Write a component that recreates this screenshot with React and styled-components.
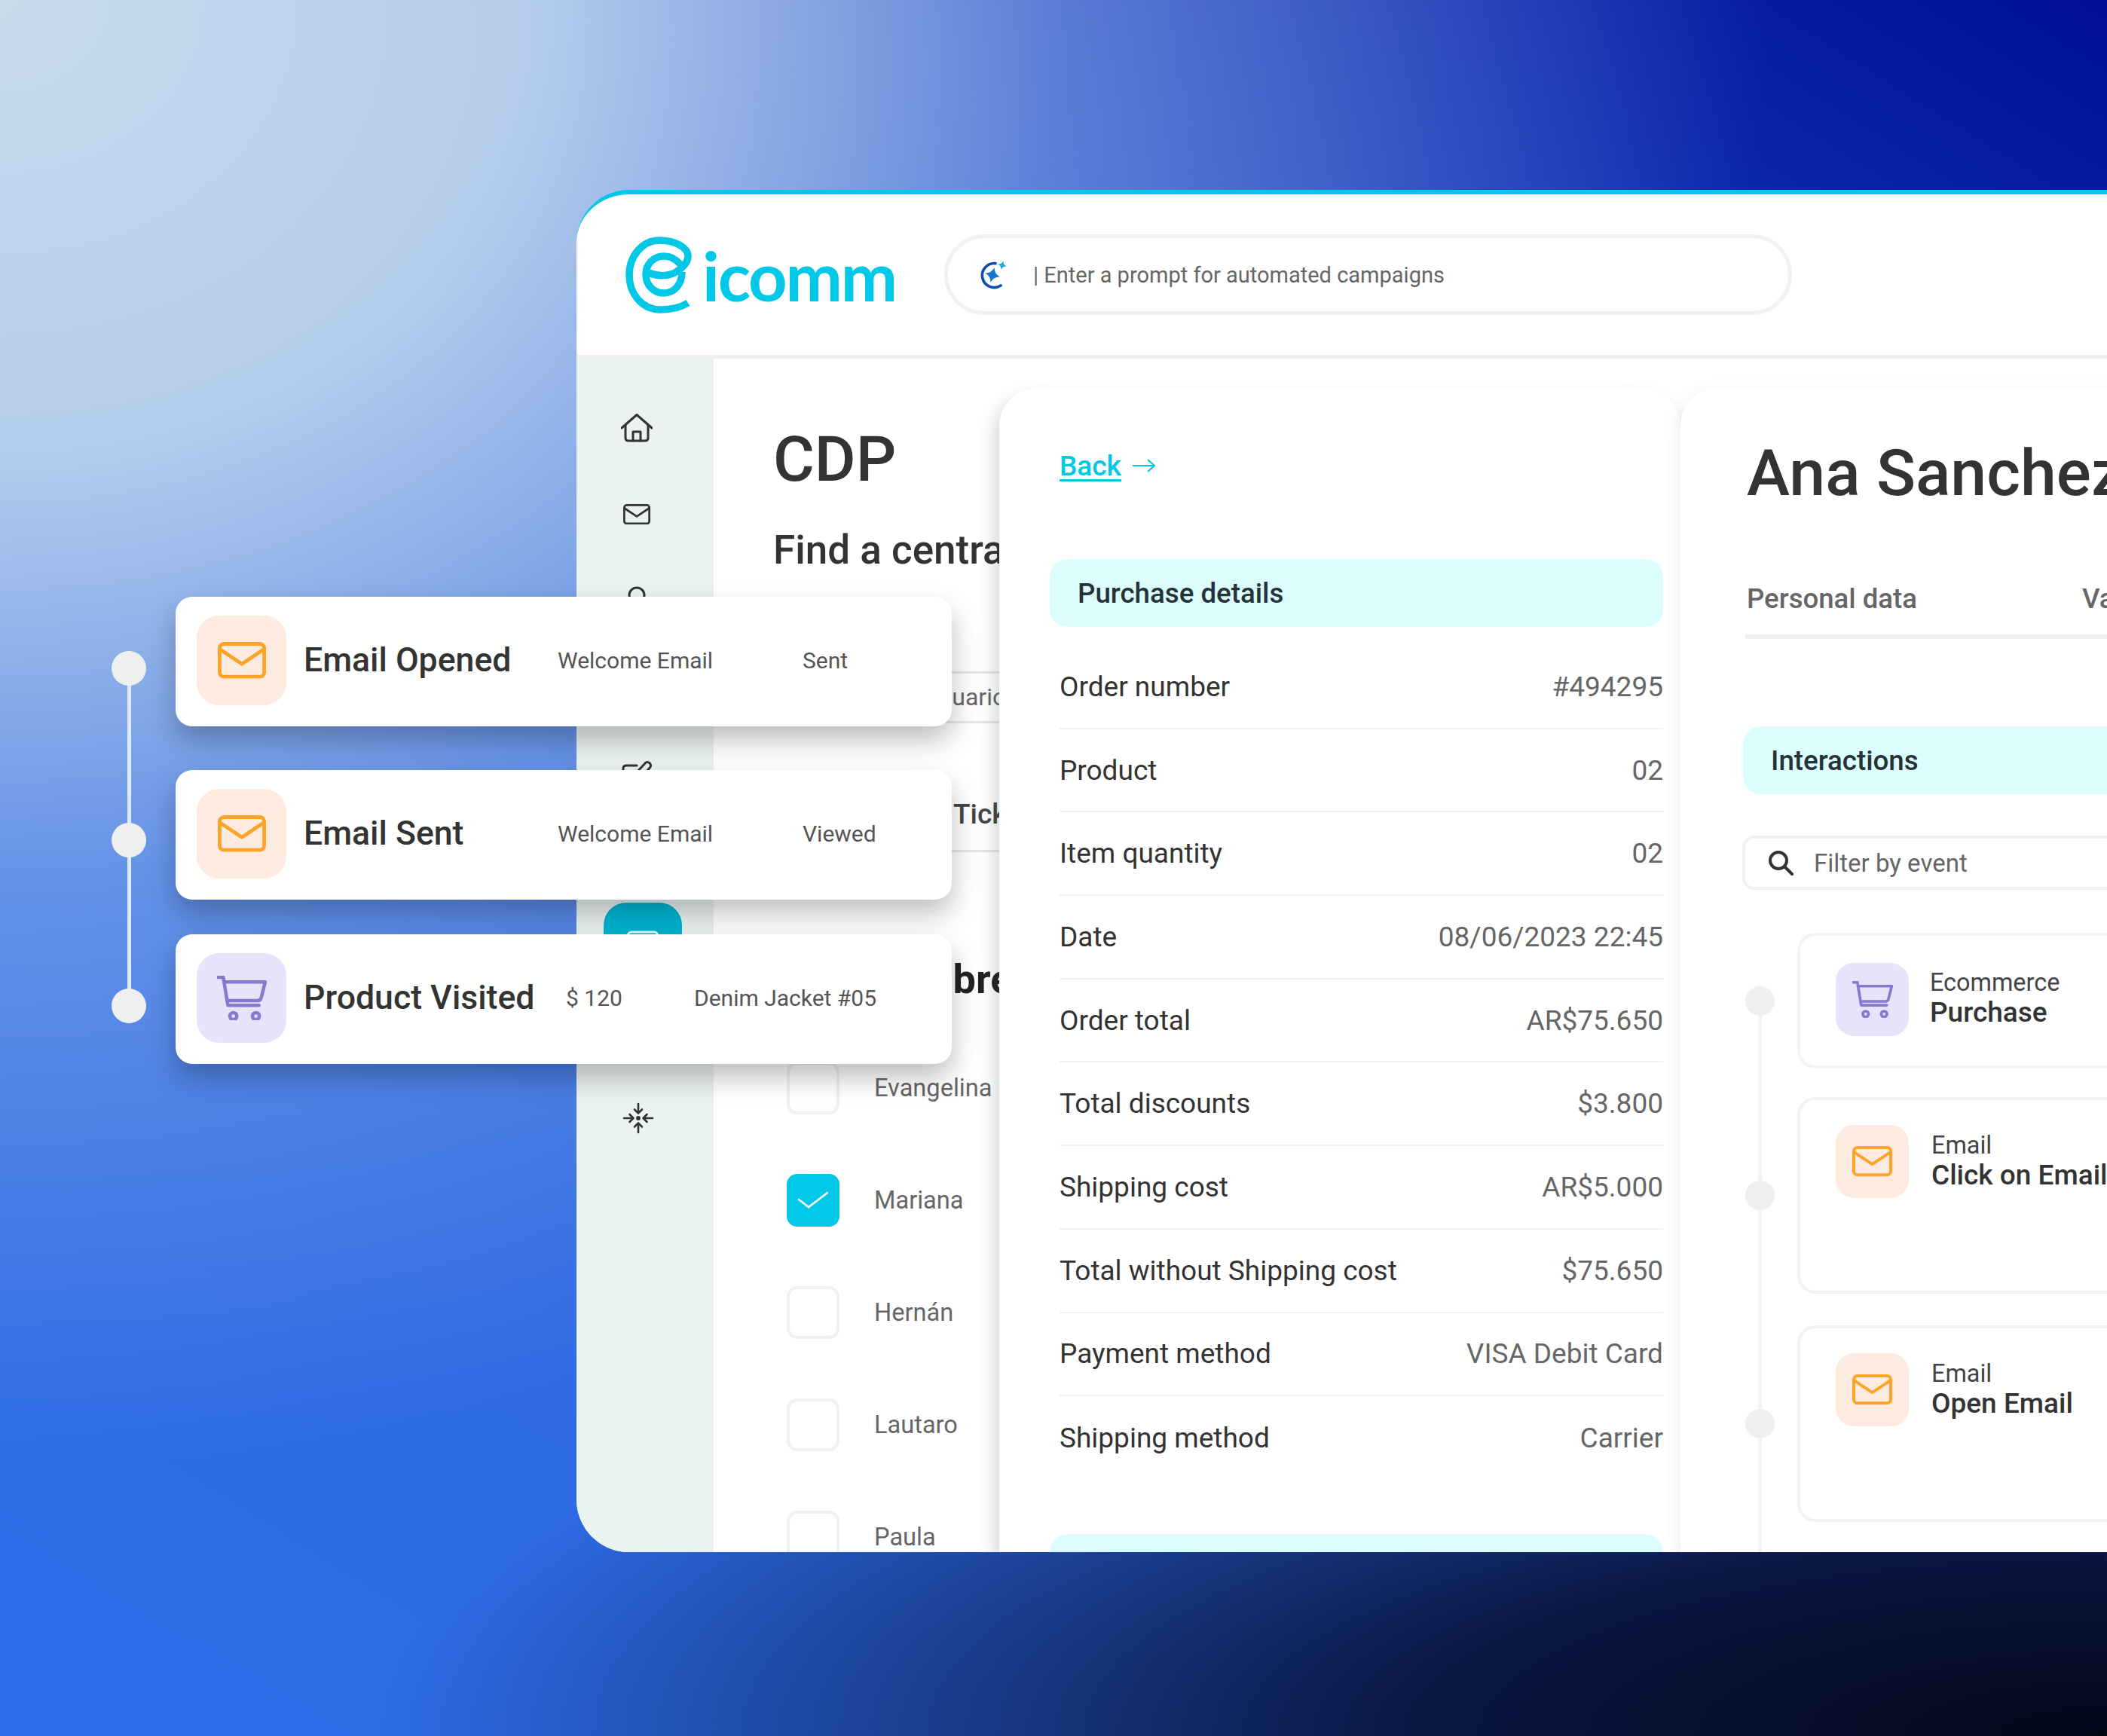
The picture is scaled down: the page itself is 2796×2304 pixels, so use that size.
import React from 'react';
import styled, { createGlobalStyle } from 'styled-components';

const GlobalStyle = createGlobalStyle`
  html, body { margin: 0; padding: 0; }
  body { font-family: Roboto, "Liberation Sans", sans-serif; color: #333; }
  * { box-sizing: border-box; }
`;

const Page = styled.div`
  position: relative;
  width: 2796px;
  height: 2304px;
  overflow: hidden;
  padding: 252px 0 0 765px;
  background:
    radial-gradient(ellipse 2350px 1950px at 0 0, #c8dbeb 0%, rgba(190, 212, 238, .94) 30%, rgba(140, 175, 235, .58) 60%, rgba(120, 165, 235, 0) 100%),
    radial-gradient(ellipse 2300px 640px at 100% 100%, #030818 0%, rgba(6, 14, 50, .9) 40%, rgba(10, 30, 90, 0) 100%),
    linear-gradient(212deg, #000f98 0%, #0a26ac 13%, #2f66dc 47%, #2c6eea 100%);
`;

const Screen = styled.div`
  width: 2200px;
  height: 1808px;
  background: #fff;
  border-top: 6px solid #00c8e6;
  border-radius: 70px 0 0 70px;
  overflow: hidden;
  display: flex;
  flex-direction: column;
`;

const Header = styled.header`
  flex: 0 0 218px;
  display: flex;
  align-items: center;
  padding: 0 0 0 65px;
  border-bottom: 5px solid #f0f0f0;
`;

const Logo = styled.div`
  width: 423px;
  display: flex;
  align-items: center;
  gap: 14px;
  color: #00c8e6;
`;

const LogoWord = styled.span`
  font-family: Lato, sans-serif;
  font-size: 90px;
  font-weight: 700;
  line-height: 92px;
  letter-spacing: -2.2px;
`;

const PromptBar = styled.div`
  width: 1125px;
  height: 107px;
  display: flex;
  align-items: center;
  gap: 34px;
  padding-left: 41px;
  border: 5px solid #f1f1f1;
  border-radius: 54px;
  font-size: 29px;
  color: #666;
`;

const Body = styled.div`
  flex: 1;
  display: flex;
  min-height: 0;
`;

const Sidebar = styled.nav`
  flex: 0 0 182px;
  display: flex;
  flex-direction: column;
  padding: 35px 22px 0 0;
  background: #ebf2f2;
`;

const NavItem = styled.div`
  flex: 0 0 114.5px;
  display: flex;
  align-items: center;
  justify-content: center;
  color: #333;
`;

const ActiveNav = styled.div`
  flex: 0 0 auto;
  width: 104px;
  height: 114px;
  margin-left: 16px;
  border-radius: 30px;
  background: #00b4d2;
  display: flex;
  align-items: center;
  justify-content: center;
  color: #dff8fb;
`;

const Content = styled.section`
  flex: 0 0 379px;
  overflow: hidden;
  padding: 92px 0 0 79px;
`;

const Title = styled.h1`
  margin: 0;
  font-size: 84px;
  font-weight: 500;
  line-height: 84px;
  color: #333;
  white-space: nowrap;
`;

const Subtitle = styled.h2`
  margin: 48px 0 0;
  font-size: 53px;
  font-weight: 500;
  line-height: 60px;
  color: #333;
  white-space: nowrap;
`;

const TableRow = styled.div`
  height: ${(p) => p.$height}px;
  margin-top: ${(p) => p.$top || 0}px;
  padding: ${(p) => p.$pad || 0}px 0 0 ${(p) => p.$indent}px;
  border-bottom: 3px solid #e6e6e6;
  border-top: ${(p) => (p.$lined ? '3px solid #e6e6e6' : 'none')};
  font-size: ${(p) => p.$size}px;
  font-weight: ${(p) => p.$weight || 400};
  line-height: 60px;
  color: ${(p) => p.$color || '#666'};
  white-space: nowrap;
`;

const SectionHeading = styled.h3`
  margin: 139px 0 39px;
  padding-left: 131px;
  font-size: 54px;
  font-weight: 700;
  line-height: 60px;
  color: #222;
  white-space: nowrap;
`;

const CheckRow = styled.label`
  height: 149px;
  display: flex;
  align-items: center;
  gap: 46px;
  padding-left: 18px;
  font-size: 32.6px;
  color: #666;
`;

const Box = styled.span`
  flex: 0 0 70px;
  height: 70px;
  display: flex;
  align-items: center;
  justify-content: center;
  border-radius: 14px;
  border: ${(p) => (p.$checked ? 'none' : '4px solid #f1f1f1')};
  background: ${(p) => (p.$checked ? '#00c8e6' : '#fff')};
`;

const DetailPanel = styled.section`
  position: relative;
  z-index: 1;
  flex: 0 0 904px;
  margin-top: 39px;
  padding: 79px 23px 0 80px;
  background: #fff;
  border-radius: 50px 50px 0 0;
  box-shadow: -6px 12px 24px rgba(40, 60, 60, .2);
  overflow: hidden;
`;

const BackLink = styled.a`
  display: flex;
  align-items: center;
  gap: 14px;
  height: 48px;
  font-size: 37px;
  font-weight: 500;
  color: #00c8e6;
  span { text-decoration: underline; text-underline-offset: 5px; }
`;

const Band = styled.div`
  height: 90px;
  margin: ${(p) => p.$margin};
  padding-left: ${(p) => p.$pad}px;
  display: flex;
  align-items: center;
  border-radius: 24px;
  background: #dcfdfe;
  font-size: 36.7px;
  font-weight: 500;
  color: #263238;
  white-space: nowrap;
`;

const DetailRow = styled.div`
  height: 110.7px;
  display: flex;
  align-items: center;
  justify-content: space-between;
  border-bottom: ${(p) => (p.$last ? 'none' : '2px solid #f1f1f1')};
  font-size: 37px;
  color: #333;
  b { font-weight: 400; color: #666; }
`;

const ProfilePanel = styled.section`
  position: relative;
  z-index: 2;
  flex: 0 0 900px;
  margin-top: 39px;
  padding: 63px 0 0 88px;
  background: #fff;
  border-radius: 50px 0 0 0;
  box-shadow: -2px 6px 22px rgba(40, 60, 60, .1);
  overflow: hidden;
`;

const Name = styled.h1`
  margin: 0;
  font-size: 86px;
  font-weight: 500;
  line-height: 100px;
  color: #333;
  white-space: nowrap;
`;

const Tabs = styled.div`
  margin: 93px 0 0 -2px;
  padding: 0 0 23px 2px;
  display: flex;
  gap: 219px;
  height: 77px;
  border-bottom: 6px solid #efefef;
  font-size: 36.6px;
  font-weight: 500;
  line-height: 48px;
  color: #666;
  white-space: nowrap;
`;

const FilterBox = styled.div`
  height: 72px;
  margin: 55px 0 57px -6px;
  padding-left: 30px;
  display: flex;
  align-items: center;
  gap: 27px;
  border: 4px solid #f1f1f1;
  border-radius: 16px;
  font-size: 33px;
  color: #666;
`;

const Timeline = styled.div`
  display: flex;
  gap: 30px;
  margin-left: -2px;
`;

const Rail = styled.div`
  position: relative;
  flex: 0 0 ${(p) => p.$width}px;
  display: flex;
  flex-direction: column;
  align-items: center;
  padding-top: ${(p) => p.$top}px;

  &::before {
    content: '';
    position: absolute;
    top: ${(p) => p.$top}px;
    bottom: ${(p) => p.$bottom}px;
    left: 50%;
    width: 5px;
    margin-left: -2.5px;
    background: ${(p) => p.$line};
  }
`;

const Dot = styled.span`
  position: relative;
  flex: 0 0 auto;
  width: ${(p) => p.$size}px;
  height: ${(p) => p.$size}px;
  margin-bottom: ${(p) => p.$after}px;
  border-radius: 50%;
  background: ${(p) => p.$color};
`;

const EventList = styled.div`
  flex: 1;
  display: flex;
  flex-direction: column;
`;

const EventCard = styled.article`
  height: ${(p) => p.$height}px;
  margin-bottom: ${(p) => p.$after}px;
  padding: ${(p) => p.$top}px 0 0 47px;
  display: flex;
  align-items: flex-start;
  gap: ${(p) => p.$gap}px;
  border: 4px solid #f2f2f2;
  border-right: none;
  border-radius: 24px 0 0 24px;
`;

const IconTile = styled.span`
  flex: 0 0 ${(p) => p.$size}px;
  height: ${(p) => p.$size}px;
  display: flex;
  align-items: center;
  justify-content: center;
  border-radius: ${(p) => p.$radius}px;
  background: ${(p) => (p.$tone === 'cart' ? '#e7e3fb' : '#feebe0')};
`;

const EventText = styled.div`
  padding-top: ${(p) => p.$top}px;
  font-size: 32.4px;
  line-height: 39px;
  color: #444;
  white-space: nowrap;
  strong { display: block; font-size: 37px; font-weight: 500; color: #333; }
`;

const FloatGroup = styled.div`
  position: absolute;
  z-index: 5;
  left: 148px;
  top: 792px;
  display: flex;
  gap: 39px;
`;

const FloatCards = styled.div`
  width: 1030px;
  display: flex;
  flex-direction: column;
`;

const FloatCard = styled.article`
  height: 172px;
  margin-bottom: ${(p) => p.$after}px;
  padding: 0 0 3px 28px;
  display: flex;
  align-items: center;
  background: #fff;
  border-radius: 22px;
  box-shadow: 0 18px 36px rgba(0, 0, 0, .26);
`;

const FloatTitle = styled.span`
  flex: 0 0 ${(p) => p.$width}px;
  margin-left: 23px;
  padding-bottom: 1px;
  font-size: 44.6px;
  font-weight: 500;
  color: #333;
  white-space: nowrap;
`;

const FloatMeta = styled.span`
  flex: 0 0 ${(p) => p.$width}px;
  font-size: 30px;
  color: #555;
  white-space: nowrap;
`;

const MailIcon = ({ size = 64, color = '#fba428', sw = 5 }) => (
  <svg width={size} height={size * 0.76} viewBox="0 0 66 50" fill="none" stroke={color} strokeWidth={sw} strokeLinejoin="round" strokeLinecap="round">
    <rect x="2.5" y="2.5" width="61" height="45" rx="6" />
    <path d="M3 10 L33 30 L63 10" />
  </svg>
);

const CartIcon = ({ size = 66, sw = 4.4 }) => (
  <svg width={size} height={size * 0.906} viewBox="0 0 64 58" fill="none" stroke="#8878d0" strokeWidth={sw} strokeLinecap="round" strokeLinejoin="round">
    <path d="M1 2 H8 L14 38 H54" />
    <path d="M9 8 H62 L57 28 Q56 32 52 32 H13" />
    <circle cx="21" cy="52" r="4.5" />
    <circle cx="50" cy="52" r="4.5" />
  </svg>
);

const HomeIcon = () => (
  <svg width="42" height="38" viewBox="0 0 42 38" fill="none" stroke="currentColor" strokeWidth="3" strokeLinecap="round" strokeLinejoin="round">
    <path d="M1 19 L21 1.5 L41 19" />
    <path d="M6 15 V32 Q6 36 10 36 H32 Q36 36 36 32 V15" />
    <path d="M16 36 V24 H26 V36" />
  </svg>
);

const UserIcon = () => (
  <svg width="40" height="40" viewBox="0 0 40 40" fill="none" stroke="currentColor" strokeWidth="3">
    <circle cx="20" cy="13" r="10" />
    <path d="M4 38 Q6 26 20 26 Q34 26 36 38" />
  </svg>
);

const EditIcon = () => (
  <svg width="40" height="40" viewBox="0 0 40 40" fill="none" stroke="currentColor" strokeWidth="3" strokeLinecap="round">
    <path d="M2 22 V14 Q2 10 6 10 H20" />
    <path d="M19 20 L32 6 A4.5 4.5 0 0 1 38 12 L26 26" />
  </svg>
);

const SegmentIcon = () => (
  <svg width="44" height="40" viewBox="0 0 44 40" fill="none" stroke="currentColor" strokeWidth="3">
    <rect x="2" y="2" width="40" height="36" rx="5" />
    <path d="M12 14 H32 M12 24 H32" />
  </svg>
);

const CollapseIcon = () => (
  <svg width="42" height="42" viewBox="0 0 42 42" fill="none" stroke="currentColor" strokeWidth="2.6" strokeLinecap="round" strokeLinejoin="round" style={{ marginLeft: 3 }}>
    <circle cx="21" cy="21" r="1.6" fill="currentColor" />
    <path d="M21 2 V14 M16 9.5 L21 14.5 L26 9.5" />
    <path d="M21 40 V28 M16 32.5 L21 27.5 L26 32.5" />
    <path d="M2 21 H14 M9.5 16 L14.5 21 L9.5 26" />
    <path d="M40 21 H28 M32.5 16 L27.5 21 L32.5 26" />
  </svg>
);

const IcommMark = () => (
  <svg width="88" height="102" viewBox="15 15 88 102" fill="none" stroke="#00c8e6" strokeWidth="9.5">
    <path d="M98 103 C88 109 76 112 62 112 C36 112 20 90 20 66 C20 40 38 20 60 20 C82 20 98 30 98 41 C98 50 90 57 82 62 C72 68 58 68 46 63" />
    <path d="M88 52 C82 45 74 41 66 41 C52 41 42 52 42 65 C42 79 52 90 66 90 C80 90 90 78 90 62" />
  </svg>
);

const SparkIcon = () => (
  <svg width="38" height="38" viewBox="0 0 38 38" fill="none">
    <path d="M22 3.6 A16 16 0 1 0 29 33" stroke="#0b4cb5" strokeWidth="3.6" strokeLinecap="round" />
    <path d="M18 9 Q20 17 28 19 Q20 21 18 29 Q16 21 8 19 Q16 17 18 9 Z" fill="#1476cc" transform="rotate(15 18 19)" />
    <path d="M31 0 Q32 5 37 6 Q32 7 31 12 Q30 7 25 6 Q30 5 31 0 Z" fill="#27a3df" transform="rotate(15 31 6)" />
  </svg>
);

const SearchIcon = () => (
  <svg width="34" height="34" viewBox="0 0 34 34" fill="none" stroke="#333" strokeWidth="4" strokeLinecap="round">
    <circle cx="14" cy="14" r="11" />
    <path d="M22.5 22.5 L32 32" />
  </svg>
);

const ArrowIcon = () => (
  <svg width="32" height="20" viewBox="0 0 32 20" fill="none" stroke="#00c8e6" strokeWidth="2">
    <path d="M1 10 H30 M21 2 L30 10 L21 18" />
  </svg>
);

const CheckMark = () => (
  <svg width="42" height="26" viewBox="0 0 42 26" fill="none" stroke="#fff" strokeWidth="2.6" strokeLinecap="round">
    <path d="M2 12 L15 22 L40 3" />
  </svg>
);

const SidebarMail = () => <MailIcon size={36} color="currentColor" sw={5} />;

const navTop = [HomeIcon, SidebarMail, UserIcon, UserIcon, EditIcon, UserIcon];

const people = [
  { name: 'Evangelina' },
  { name: 'Mariana', checked: true },
  { name: 'Hernán' },
  { name: 'Lautaro' },
  { name: 'Paula' },
];

const details = [
  ['Order number', '#494295'],
  ['Product', '02'],
  ['Item quantity', '02'],
  ['Date', '08/06/2023 22:45'],
  ['Order total', 'AR$75.650'],
  ['Total discounts', '$3.800'],
  ['Shipping cost', 'AR$5.000'],
  ['Total without Shipping cost', '$75.650'],
  ['Payment method', 'VISA Debit Card'],
  ['Shipping method', 'Carrier'],
];

const events = [
  { tone: 'cart', kind: 'Ecommerce', label: 'Purchase', height: 180, after: 38, top: 36, textTop: 7, gap: 28 },
  { tone: 'mail', kind: 'Email', label: 'Click on Email', height: 261, after: 42, top: 33, textTop: 8, gap: 30 },
  { tone: 'mail', kind: 'Email', label: 'Open Email', height: 261, after: 0, top: 33, textTop: 8, gap: 30 },
];

const floats = [
  { tone: 'mail', title: 'Email Opened', titleW: 337, a: 'Welcome Email', aW: 325, b: 'Sent', after: 58 },
  { tone: 'mail', title: 'Email Sent', titleW: 337, a: 'Welcome Email', aW: 325, b: 'Viewed', after: 46 },
  { tone: 'cart', title: 'Product Visited', titleW: 348, a: '$ 120', aW: 170, b: 'Denim Jacket #05', after: 0 },
];

function App() {
  return (
    <Page>
      <GlobalStyle />
      <Screen>
        <Header>
          <Logo>
            <IcommMark />
            <LogoWord>icomm</LogoWord>
          </Logo>
          <PromptBar>
            <SparkIcon />
            <span>| Enter a prompt for automated campaigns</span>
          </PromptBar>
        </Header>
        <Body>
          <Sidebar>
            {navTop.map((Icon, i) => (
              <NavItem key={i}><Icon /></NavItem>
            ))}
            <NavItem>
              <ActiveNav><SegmentIcon /></ActiveNav>
            </NavItem>
            <NavItem><UserIcon /></NavItem>
            <NavItem><CollapseIcon /></NavItem>
          </Sidebar>
          <Content>
            <Title>CDP</Title>
            <Subtitle>Find a central customer view</Subtitle>
            <TableRow $lined $top={131} $height={69} $indent={200} $size={32} $pad={1}>Usuario</TableRow>
            <TableRow $height={171} $indent={239} $size={37} $weight={500} $color="#444" $pad={91}>Ticket</TableRow>
            <SectionHeading>nombre</SectionHeading>
            {people.map((person) => (
              <CheckRow key={person.name}>
                <Box $checked={person.checked}>{person.checked && <CheckMark />}</Box>
                {person.name}
              </CheckRow>
            ))}
          </Content>
          <DetailPanel>
            <BackLink><span>Back</span><ArrowIcon /></BackLink>
            <Band $margin="100px 0 25px -13px" $pad={37}>Purchase details</Band>
            {details.map(([label, value], i) => (
              <DetailRow key={label} $last={i === details.length - 1}>
                <span>{label}</span>
                <b>{value}</b>
              </DetailRow>
            ))}
            <Band $margin="72px 0 0 -13px" $pad={37} />
          </DetailPanel>
          <ProfilePanel>
            <Name>Ana Sanchez</Name>
            <Tabs>
              <span>Personal data</span>
              <span>Values</span>
            </Tabs>
            <Band $margin="116px 0 0 -5px" $pad={37}>Interactions</Band>
            <FilterBox>
              <SearchIcon />
              <span>Filter by event</span>
            </FilterBox>
            <Timeline>
              <Rail $width={39} $top={71} $bottom={0} $line="#f3f3f3">
                <Dot $size={39} $color="#efefef" $after={219} />
                <Dot $size={39} $color="#efefef" $after={264} />
                <Dot $size={39} $color="#efefef" $after={200} />
              </Rail>
              <EventList>
                {events.map((event) => (
                  <EventCard key={event.label} $height={event.height} $after={event.after} $top={event.top} $gap={event.gap}>
                    <IconTile $tone={event.tone} $size={97} $radius={24}>
                      {event.tone === 'cart' ? <CartIcon size={54} sw={4.4} /> : <MailIcon size={53} sw={5} />}
                    </IconTile>
                    <EventText $top={event.textTop}>
                      {event.kind}
                      <strong>{event.label}</strong>
                    </EventText>
                  </EventCard>
                ))}
              </EventList>
            </Timeline>
          </ProfilePanel>
        </Body>
      </Screen>
      <FloatGroup>
        <Rail $width={46} $top={72} $bottom={54} $line="#dcecfa">
          <Dot $size={46} $color="#eef0f0" $after={182} />
          <Dot $size={46} $color="#eef0f0" $after={174} />
          <Dot $size={46} $color="#eef0f0" $after={0} />
        </Rail>
        <FloatCards>
          {floats.map((card) => (
            <FloatCard key={card.title} $after={card.after}>
              <IconTile $tone={card.tone} $size={119} $radius={30}>
                {card.tone === 'cart' ? <CartIcon /> : <MailIcon />}
              </IconTile>
              <FloatTitle $width={card.titleW}>{card.title}</FloatTitle>
              <FloatMeta $width={card.aW}>{card.a}</FloatMeta>
              <FloatMeta $width={300}>{card.b}</FloatMeta>
            </FloatCard>
          ))}
        </FloatCards>
      </FloatGroup>
    </Page>
  );
}

export default App;
